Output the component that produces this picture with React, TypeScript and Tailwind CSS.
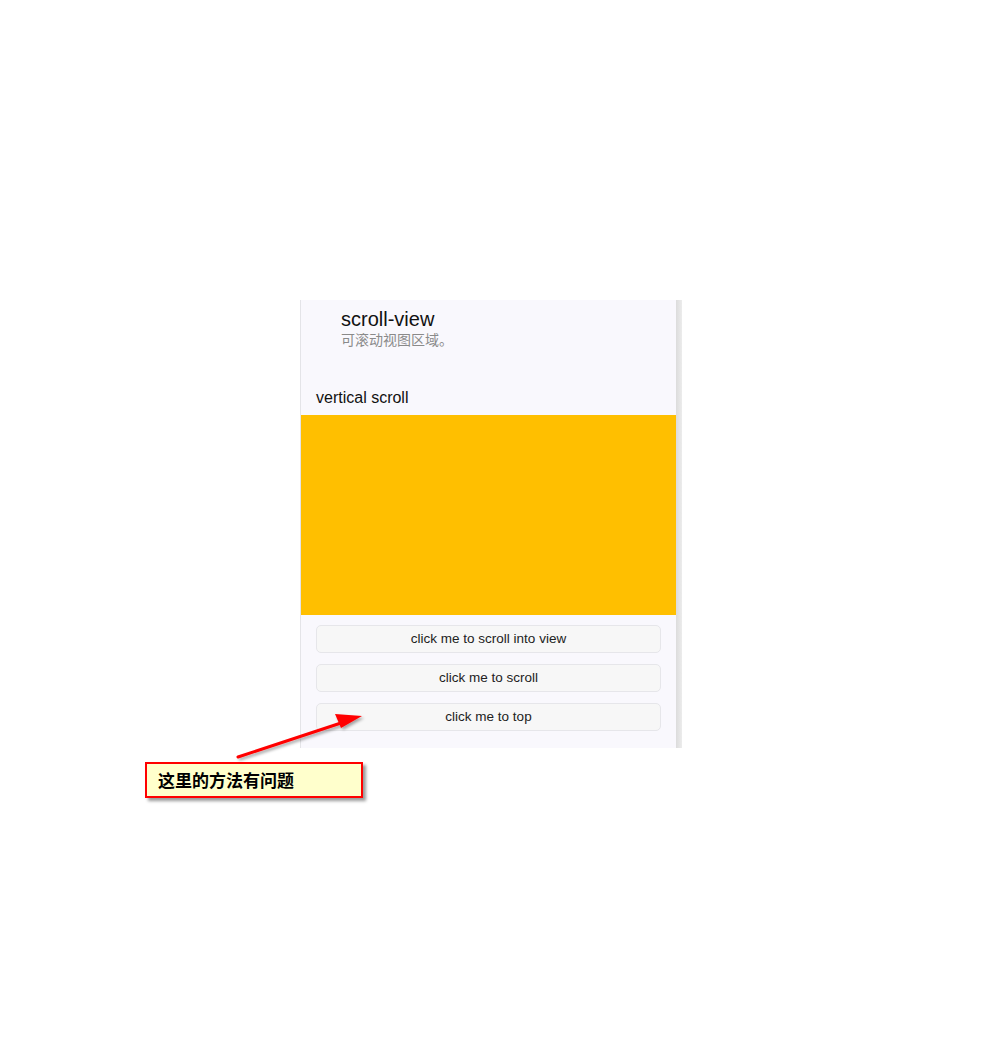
export default function App() {
  const buttons = ["click me to scroll into view", "click me to scroll", "click me to top"];

  return (
    <div
      className="relative min-h-[1048px] w-full bg-white pl-[300px] pt-[300px]"
      style={{ fontFamily: '"Liberation Sans", Arial, "Noto Sans CJK SC", sans-serif' }}
    >
      <div className="flex w-[382px]">
        {/* page content */}
        <div className="flex w-[376px] flex-col border-l border-[#e4e4e8] bg-[#f9f8fd]">
          <div className="pl-[40px] pt-[7px]">
            <div className="text-[20px] leading-[24px] text-[#111]">scroll-view</div>
            <div className="text-[14px] leading-[18px] text-[#8a8a8a]">可滚动视图区域。</div>
          </div>
          <div className="mt-[39px] pl-[15px] text-[16px] leading-[20px] text-[#111]">vertical scroll</div>
          <div className="mt-[7px] h-[200px] bg-[#ffbf00]" />
          <div className="flex flex-col gap-[11px] px-[15px] pb-[17px] pt-[10px]">
            {buttons.map((b) => (
              <div
                key={b}
                className="flex h-[28px] items-center justify-center rounded-[5px] border border-[#e6e6ea] bg-[#f7f7f7] text-[13.5px] text-[#222]"
              >
                {b}
              </div>
            ))}
          </div>
        </div>
        {/* scrollbar */}
        <div className="w-[6px] bg-gradient-to-r from-[#dcdcdc] to-[#ececec]" />
      </div>

      {/* annotation arrow */}
      <svg className="absolute left-0 top-0" width="982" height="1048" viewBox="0 0 982 1048">
        <defs>
          <filter id="sh" x="-20%" y="-50%" width="140%" height="200%">
            <feDropShadow dx="2" dy="2" stdDeviation="1.5" floodColor="#000" floodOpacity="0.35" />
          </filter>
        </defs>
        <g filter="url(#sh)">
          <line x1="238" y1="757" x2="344" y2="722" stroke="#ff0000" strokeWidth="3" strokeLinecap="round" />
          <polygon points="362,716 335,714 341,728" fill="#ff0000" />
        </g>
      </svg>

      {/* annotation box */}
      <div className="absolute left-[145px] top-[762px] flex h-[36px] w-[218px] items-center border-2 border-[#ff0000] bg-[#ffffcc] pl-[11px] shadow-[3px_3px_3px_rgba(0,0,0,0.4)]">
        <span
          className="text-[17px] font-bold text-black"
          style={{ fontFamily: '"Noto Sans CJK SC", sans-serif' }}
        >
          这里的方法有问题
        </span>
      </div>
    </div>
  );
}
